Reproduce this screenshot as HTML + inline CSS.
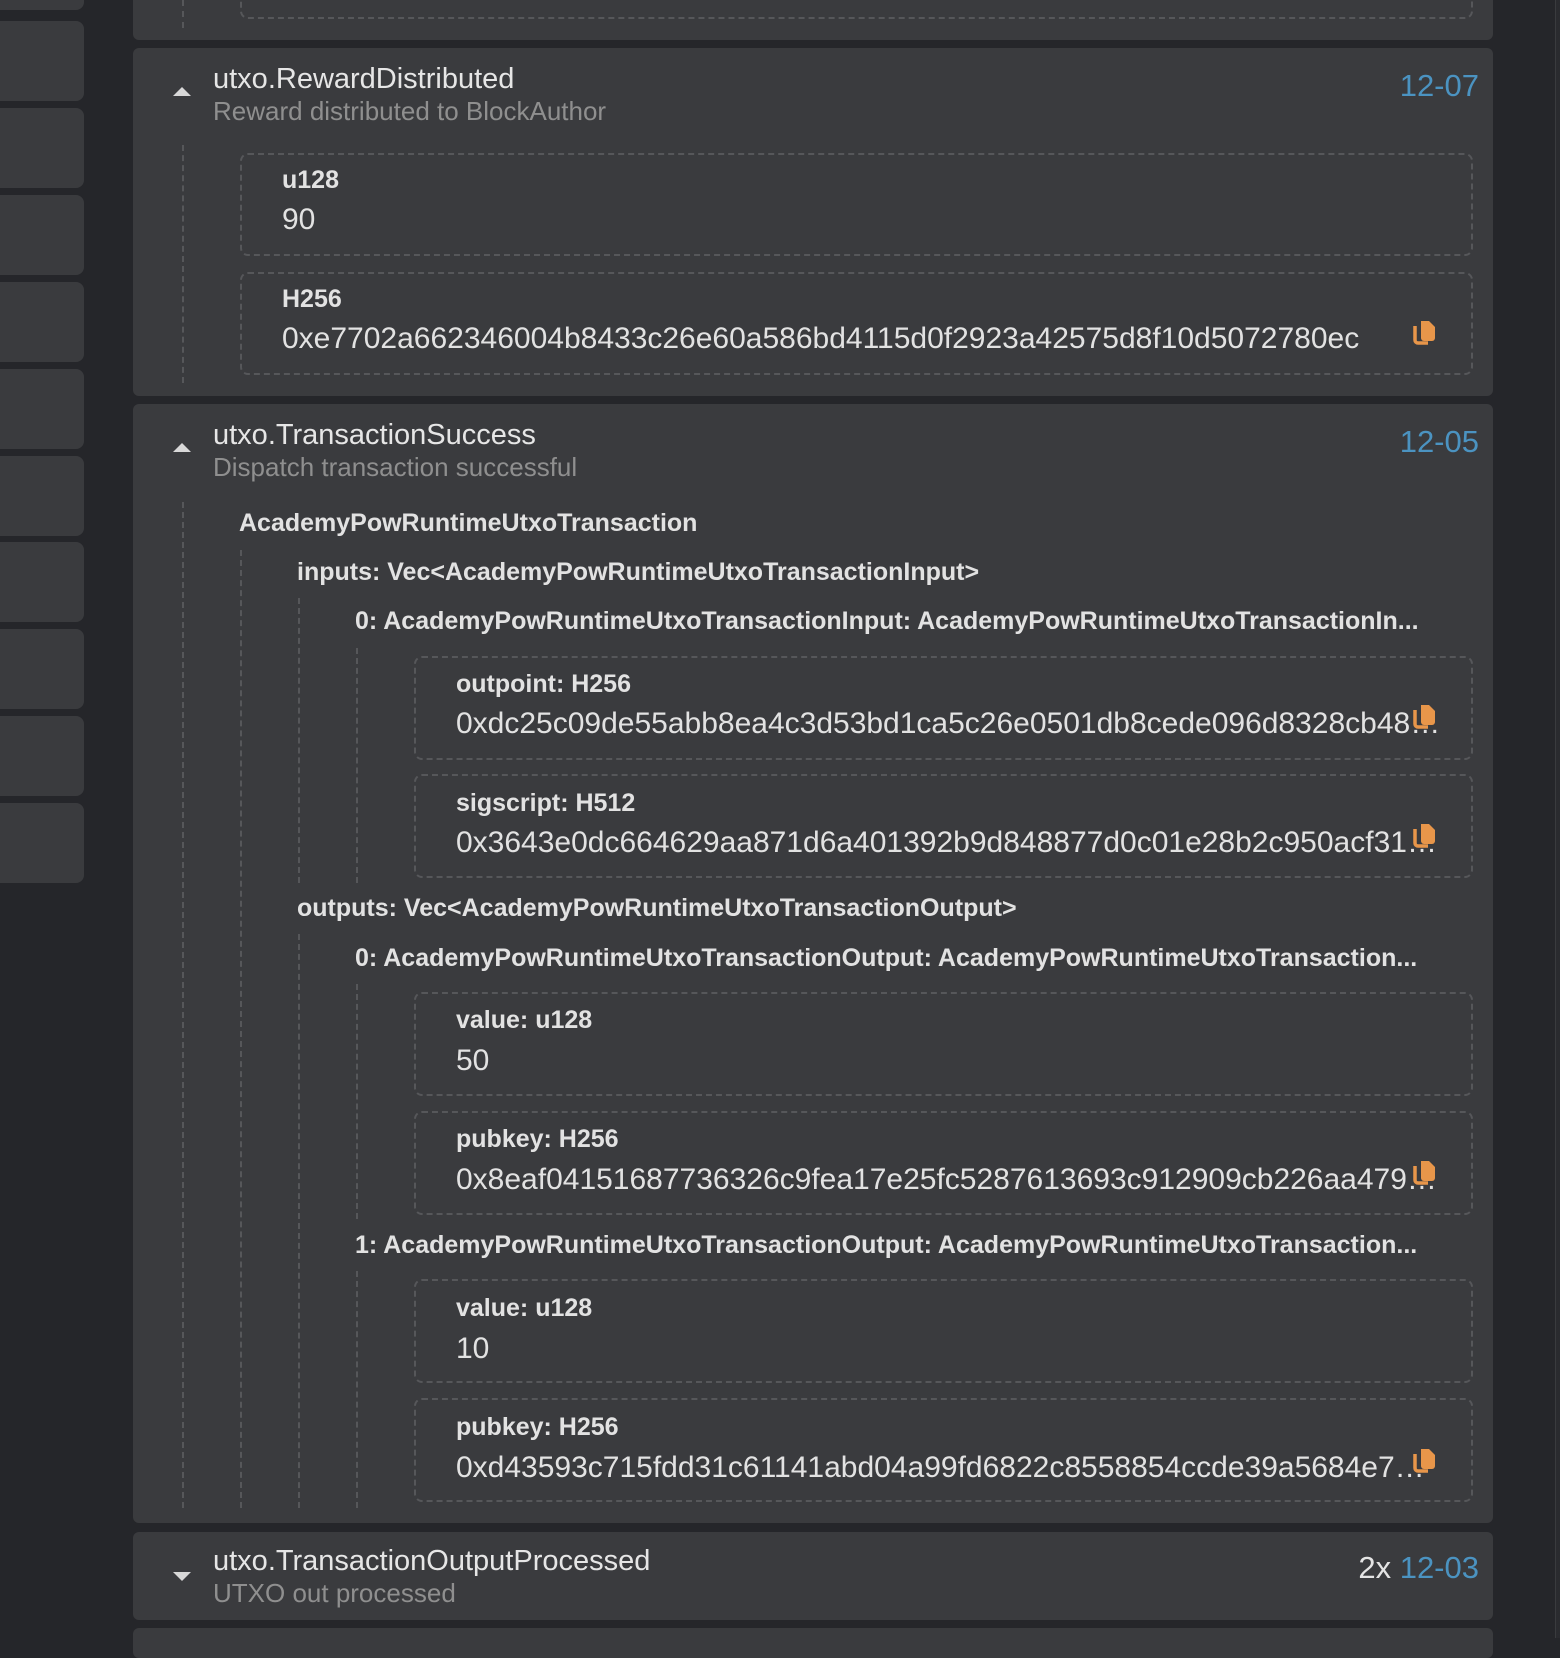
<!DOCTYPE html>
<html><head><meta charset="utf-8"><style>
*{margin:0;padding:0;box-sizing:border-box}
body{width:1560px;height:1638px;background:#25262a;position:relative;overflow:hidden;font-family:"Liberation Sans",sans-serif;color:#e4e4e4}
.a{position:absolute;white-space:nowrap}
.sb{position:absolute;left:0;width:84px;height:80px;background:#3a3b3e;border-radius:0 8px 8px 0}
.card{position:absolute;left:133px;width:1360px;background:#3a3b3e;border-radius:6px}
.vl{position:absolute;width:0;border-left:2px dashed #56575a}
.box{position:absolute;border:2px dashed #56575a;border-radius:8px}
.t{font-size:29px;color:#e6e6e6;line-height:30px}
.s{font-size:26px;color:#8f8f8f;line-height:28px}
.d{font-size:31px;color:#4b93c1;line-height:32px}
.lb{font-size:25px;font-weight:bold;color:#e2e2e2;line-height:28px}
.v{font-size:30px;color:#e2e2e2;line-height:32px;overflow:hidden}
.tri{position:absolute;width:0;height:0;border-left:9px solid transparent;border-right:9px solid transparent}
.up{border-bottom:9px solid #d8d8d8}
.dn{border-top:9px solid #d8d8d8}
.cp{position:absolute;width:26px;height:28px}
</style></head><body>
<div class="sb" style="top:-70px"></div>
<div class="sb" style="top:21px"></div>
<div class="sb" style="top:108px"></div>
<div class="sb" style="top:195px"></div>
<div class="sb" style="top:282px"></div>
<div class="sb" style="top:369px"></div>
<div class="sb" style="top:456px"></div>
<div class="sb" style="top:542px"></div>
<div class="sb" style="top:629px"></div>
<div class="sb" style="top:716px"></div>
<div class="sb" style="top:803px"></div>
<div style="position:absolute;left:1555px;top:0;width:5px;height:1638px;background:#2a2b2f;border-left:1px solid #3a3b3e"></div>

<div class="card" style="top:-20px;height:60px"></div>
<div class="vl" style="left:182px;top:0;height:28px"></div>
<div class="box" style="left:240px;top:-20px;width:1233px;height:39px"></div>

<div class="card" style="top:48px;height:348px"></div>
<div class="tri up" style="left:173px;top:87px"></div>
<div class="a t" style="left:213px;top:64px">utxo.RewardDistributed</div>
<div class="a s" style="left:213px;top:97px">Reward distributed to BlockAuthor</div>
<div class="a d" style="right:81px;top:70px">12-07</div>
<div class="vl" style="left:182px;top:145px;height:238px"></div>
<div class="box" style="left:240px;top:153px;width:1233px;height:103px"></div>
<div class="a lb" style="left:282px;top:166px">u128</div>
<div class="a v" style="left:282px;top:204px">90</div>
<div class="box" style="left:240px;top:272px;width:1233px;height:103px"></div>
<div class="a lb" style="left:282px;top:285px">H256</div>
<div class="a v" style="left:282px;top:323px">0xe7702a662346004b8433c26e60a586bd4115d0f2923a42575d8f10d5072780ec</div>
<svg class="cp" style="left:1412px;top:318px" viewBox="0 0 26 28"><path d="M3 8v14a3 3 0 0 0 3 3h10" fill="none" stroke="#e8964a" stroke-width="3.5"/><path d="M9 3h8l6 6v11a3 3 0 0 1-3 3h-8a3 3 0 0 1-3-3z" fill="#e8964a"/></svg>

<div class="card" style="top:404px;height:1119px"></div>
<div class="tri up" style="left:173px;top:443px"></div>
<div class="a t" style="left:213px;top:420px">utxo.TransactionSuccess</div>
<div class="a s" style="left:213px;top:453px">Dispatch transaction successful</div>
<div class="a d" style="right:81px;top:426px">12-05</div>
<div class="vl" style="left:182px;top:502px;height:1006px"></div>
<div class="a lb" style="left:239px;top:509px">AcademyPowRuntimeUtxoTransaction</div>
<div class="vl" style="left:240px;top:550px;height:958px"></div>
<div class="a lb" style="left:297px;top:558px">inputs: Vec&lt;AcademyPowRuntimeUtxoTransactionInput&gt;</div>
<div class="vl" style="left:298px;top:598px;height:285px"></div>
<div class="a lb" style="left:355px;top:607px">0: AcademyPowRuntimeUtxoTransactionInput: AcademyPowRuntimeUtxoTransactionIn...</div>
<div class="vl" style="left:356px;top:648px;height:235px"></div>
<div class="box" style="left:414px;top:656px;width:1059px;height:104px"></div>
<div class="a lb" style="left:456px;top:670px">outpoint: H256</div>
<div class="a v" style="left:456px;top:708px;width:985px;text-overflow:ellipsis">0xdc25c09de55abb8ea4c3d53bd1ca5c26e0501db8cede096d8328cb48a1b2c3d4e5f6</div>
<svg class="cp" style="left:1412px;top:702px" viewBox="0 0 26 28"><path d="M3 8v14a3 3 0 0 0 3 3h10" fill="none" stroke="#e8964a" stroke-width="3.5"/><path d="M9 3h8l6 6v11a3 3 0 0 1-3 3h-8a3 3 0 0 1-3-3z" fill="#e8964a"/></svg>
<div class="box" style="left:414px;top:774px;width:1059px;height:104px"></div>
<div class="a lb" style="left:456px;top:789px">sigscript: H512</div>
<div class="a v" style="left:456px;top:827px;width:985px;text-overflow:ellipsis">0x3643e0dc664629aa871d6a401392b9d848877d0c01e28b2c950acf31a1b2c3d4e5f6</div>
<svg class="cp" style="left:1412px;top:821px" viewBox="0 0 26 28"><path d="M3 8v14a3 3 0 0 0 3 3h10" fill="none" stroke="#e8964a" stroke-width="3.5"/><path d="M9 3h8l6 6v11a3 3 0 0 1-3 3h-8a3 3 0 0 1-3-3z" fill="#e8964a"/></svg>

<div class="a lb" style="left:297px;top:894px">outputs: Vec&lt;AcademyPowRuntimeUtxoTransactionOutput&gt;</div>
<div class="vl" style="left:298px;top:934px;height:574px"></div>
<div class="a lb" style="left:355px;top:944px">0: AcademyPowRuntimeUtxoTransactionOutput: AcademyPowRuntimeUtxoTransaction...</div>
<div class="vl" style="left:356px;top:984px;height:235px"></div>
<div class="box" style="left:414px;top:992px;width:1059px;height:104px"></div>
<div class="a lb" style="left:456px;top:1006px">value: u128</div>
<div class="a v" style="left:456px;top:1045px">50</div>
<div class="box" style="left:414px;top:1111px;width:1059px;height:104px"></div>
<div class="a lb" style="left:456px;top:1125px">pubkey: H256</div>
<div class="a v" style="left:456px;top:1164px;width:990px;text-overflow:ellipsis">0x8eaf04151687736326c9fea17e25fc5287613693c912909cb226aa4794f26a48</div>
<svg class="cp" style="left:1412px;top:1158px" viewBox="0 0 26 28"><path d="M3 8v14a3 3 0 0 0 3 3h10" fill="none" stroke="#e8964a" stroke-width="3.5"/><path d="M9 3h8l6 6v11a3 3 0 0 1-3 3h-8a3 3 0 0 1-3-3z" fill="#e8964a"/></svg>
<div class="a lb" style="left:355px;top:1231px">1: AcademyPowRuntimeUtxoTransactionOutput: AcademyPowRuntimeUtxoTransaction...</div>
<div class="vl" style="left:356px;top:1271px;height:237px"></div>
<div class="box" style="left:414px;top:1279px;width:1059px;height:104px"></div>
<div class="a lb" style="left:456px;top:1294px">value: u128</div>
<div class="a v" style="left:456px;top:1333px">10</div>
<div class="box" style="left:414px;top:1398px;width:1059px;height:104px"></div>
<div class="a lb" style="left:456px;top:1413px">pubkey: H256</div>
<div class="a v" style="left:456px;top:1452px;width:985px;text-overflow:ellipsis">0xd43593c715fdd31c61141abd04a99fd6822c8558854ccde39a5684e7a56da27d</div>
<svg class="cp" style="left:1412px;top:1446px" viewBox="0 0 26 28"><path d="M3 8v14a3 3 0 0 0 3 3h10" fill="none" stroke="#e8964a" stroke-width="3.5"/><path d="M9 3h8l6 6v11a3 3 0 0 1-3 3h-8a3 3 0 0 1-3-3z" fill="#e8964a"/></svg>

<div class="card" style="top:1532px;height:88px"></div>
<div class="tri dn" style="left:173px;top:1572px"></div>
<div class="a t" style="left:213px;top:1546px">utxo.TransactionOutputProcessed</div>
<div class="a s" style="left:213px;top:1579px">UTXO out processed</div>
<div class="a d" style="right:81px;top:1552px"><span style="color:#e4e4e4">2x </span>12-03</div>
<div class="card" style="top:1628px;height:30px"></div>
</body></html>
